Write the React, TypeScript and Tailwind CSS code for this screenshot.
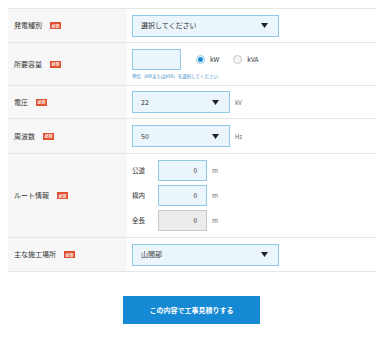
import React from 'react';

const font = { fontFamily: '"Noto Sans CJK JP", "Noto Sans", sans-serif' };

function Badge() {
  return (
    <span className="ml-[8px] inline-flex h-[7px] w-[11px] items-center justify-center bg-[#e0502e] text-[4px] font-bold leading-none text-white">
      必須
    </span>
  );
}

function Arrow() {
  return (
    <svg width="7" height="5" viewBox="0 0 7 5" className="shrink-0">
      <path d="M0 0H7L3.5 5Z" fill="#222" />
    </svg>
  );
}

function Select({ value, width }: { value: string; width: string }) {
  return (
    <div className={`flex h-[22px] ${width} items-center justify-between border border-[#8ec9e8] bg-[#eaf5fc] pl-[8px] pr-[10px]`}>
      <span className="text-[7px] text-[#333]">{value}</span>
      <Arrow />
    </div>
  );
}

function Row({ label, children, h }: { label: string; children: React.ReactNode; h: string }) {
  return (
    <div className={`flex ${h} border-b border-[#e6e6e6]`}>
      <div className="flex w-[119px] shrink-0 items-center bg-[#f7f7f7] pl-[6px]">
        <span className="text-[7px] text-[#333]">{label}</span>
        <Badge />
      </div>
      <div className="flex flex-1 items-center pl-[5px]">{children}</div>
    </div>
  );
}

function Radio({ checked, label }: { checked: boolean; label: string }) {
  return (
    <div className="flex items-center gap-[5px]">
      <span
        className={`flex h-[9px] w-[9px] items-center justify-center rounded-full border ${
          checked ? 'border-[#8ec9e8] bg-white' : 'border-[#c8c8c8] bg-[#f4f4f4]'
        }`}
      >
        {checked && <span className="h-[5px] w-[5px] rounded-full bg-[#1b8ad3]" />}
      </span>
      <span className="text-[6.5px] text-[#333]">{label}</span>
    </div>
  );
}

function RouteInput({ label, disabled }: { label: string; disabled?: boolean }) {
  return (
    <div className="flex items-center">
      <span className="w-[26px] text-[6.5px] text-[#333]">{label}</span>
      <div
        className={`flex h-[21px] w-[49px] items-center justify-end pr-[9px] border ${
          disabled ? 'border-[#c8c8c8] bg-[#ececec]' : 'border-[#8ec9e8] bg-[#eaf5fc]'
        }`}
      >
        <span className="text-[6.5px] text-[#333]">0</span>
      </div>
      <span className="ml-[5px] text-[6.5px] text-[#666]">m</span>
    </div>
  );
}

export default function App() {
  return (
    <div className="min-h-[341px] w-[383px] bg-white px-[8px] pt-[8px]" style={font}>
      <div className="w-[368px] border-t border-[#e6e6e6]">
        <Row label="発電種別" h="h-[34px]">
          <Select value="選択してください" width="w-[147px]" />
        </Row>
        <Row label="所要容量" h="h-[43px]">
          <div className="flex flex-col">
            <div className="flex items-center">
              <div className="h-[21px] w-[49px] border border-[#8ec9e8] bg-[#eaf5fc]" />
              <div className="ml-[15px] flex items-center gap-[14px]">
                <Radio checked label="kW" />
                <Radio checked={false} label="kVA" />
              </div>
            </div>
            <span className="mt-[3px] text-[4.5px] leading-[6px] text-[#3f8fc6]">
              単位（kWまたはkVA）を選択してください
            </span>
          </div>
        </Row>
        <Row label="電圧" h="h-[33px]">
          <Select value="22" width="w-[98px]" />
          <span className="ml-[5px] text-[6px] text-[#666]">kV</span>
        </Row>
        <Row label="周波数" h="h-[35px]">
          <Select value="50" width="w-[98px]" />
          <span className="ml-[5px] text-[6px] text-[#666]">Hz</span>
        </Row>
        <Row label="ルート情報" h="h-[84px]">
          <div className="flex flex-col gap-[4px]">
            <RouteInput label="公道" />
            <RouteInput label="構内" />
            <RouteInput label="全長" disabled />
          </div>
        </Row>
        <Row label="主な施工場所" h="h-[34px]">
          <Select value="山間部" width="w-[147px]" />
        </Row>
      </div>
      <div className="mt-[24px] flex justify-center">
        <button className="flex h-[28px] w-[137px] items-center justify-center bg-[#1689d5] text-[7px] font-bold text-white">
          この内容で工事見積りする
        </button>
      </div>
    </div>
  );
}
